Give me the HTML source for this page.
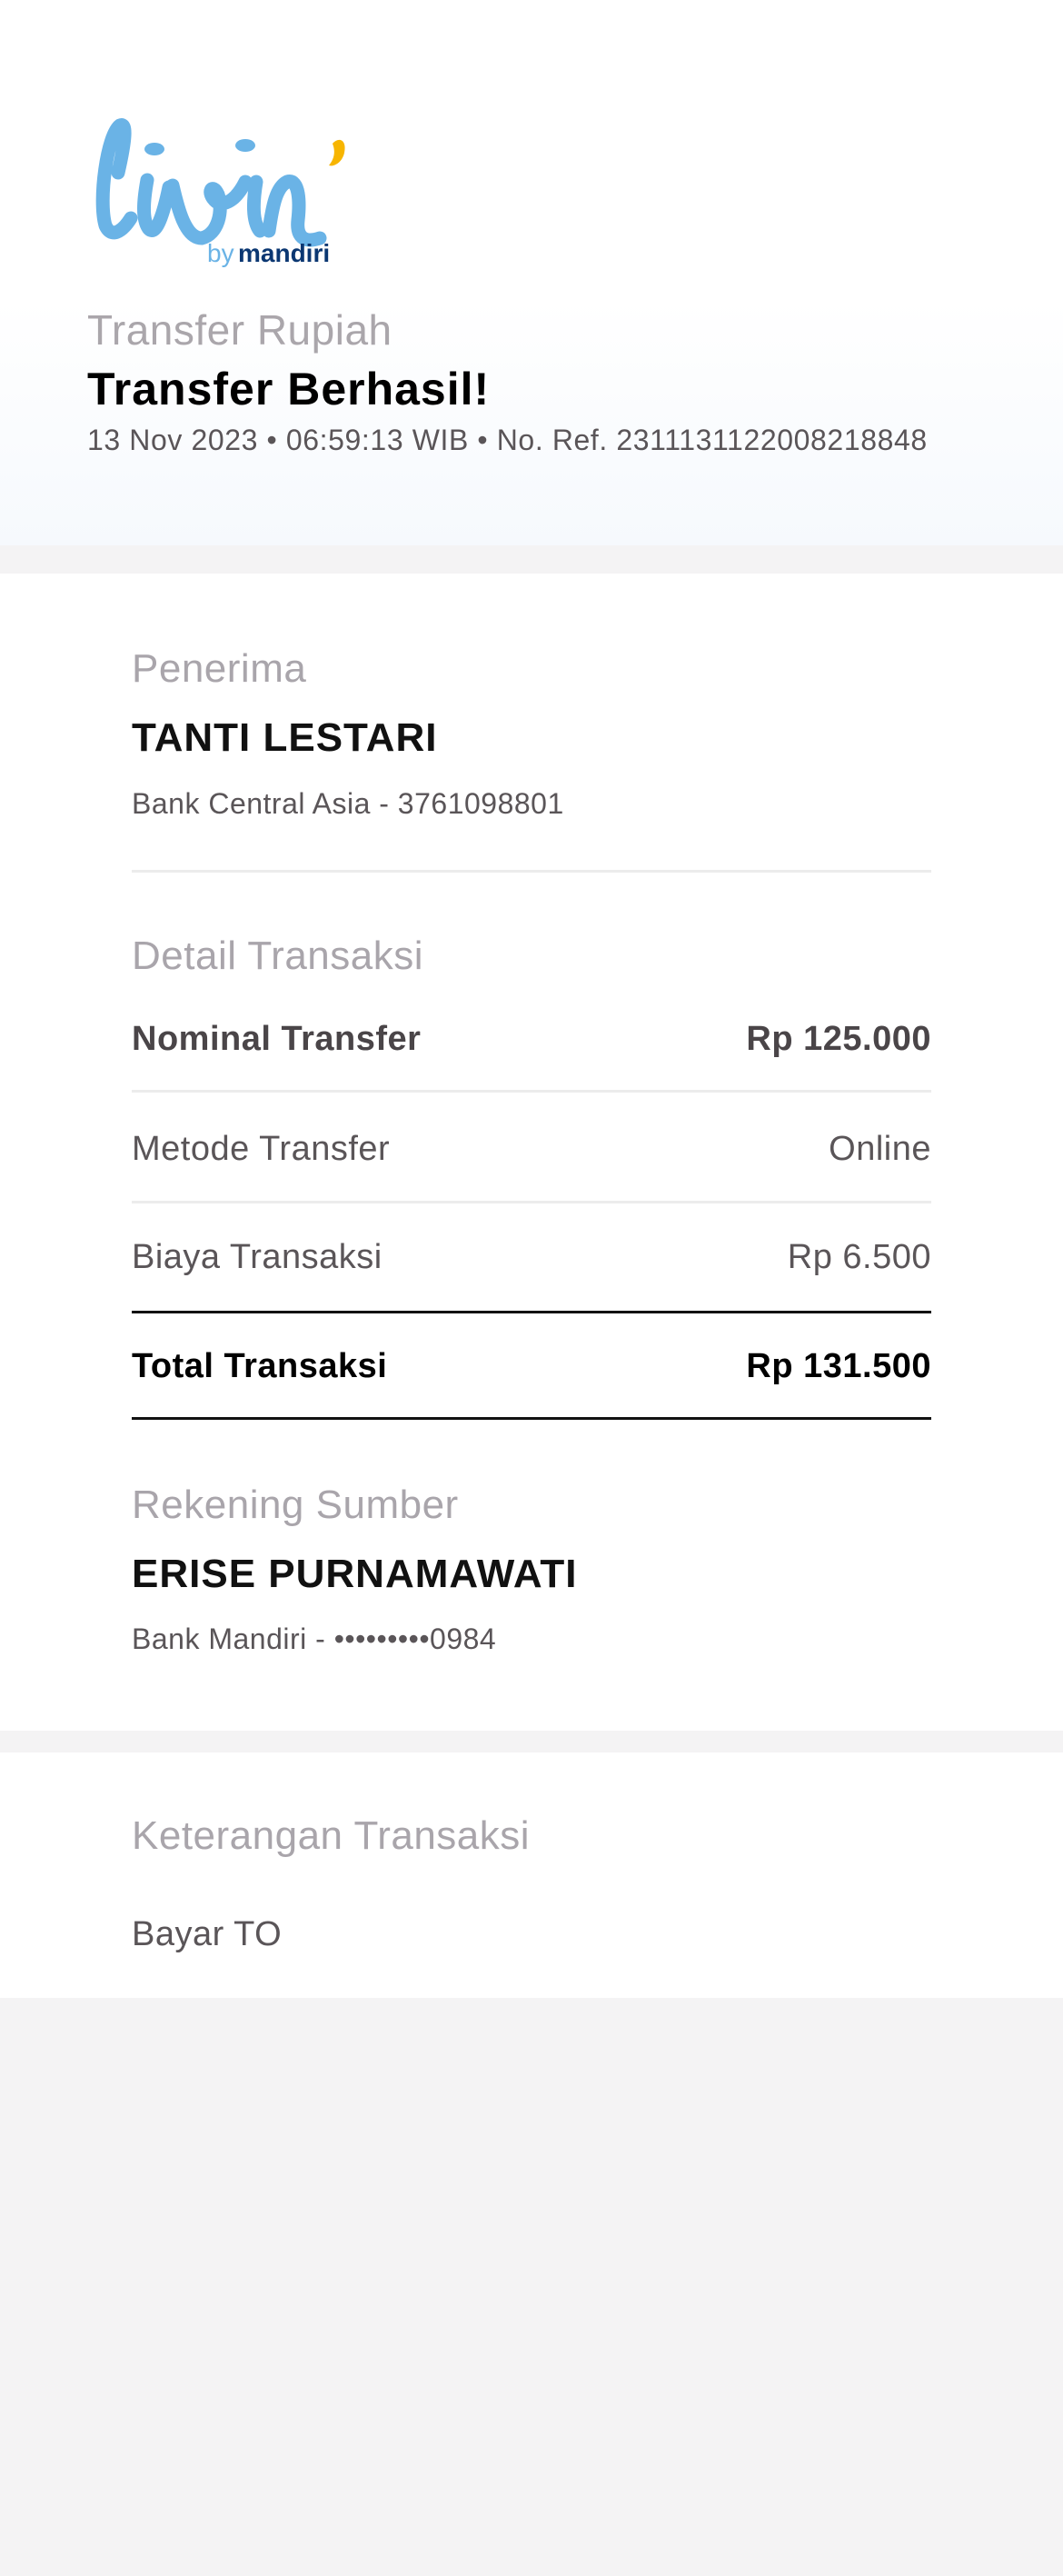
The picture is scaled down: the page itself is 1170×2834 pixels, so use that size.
<!DOCTYPE html>
<html><head><meta charset="utf-8">
<style>
*{margin:0;padding:0;box-sizing:border-box}
body{width:1170px;height:2834px;background:#f4f3f4;position:relative;font-family:"Liberation Sans",sans-serif;overflow:hidden}
.abs{position:absolute;white-space:nowrap}
.hdr{position:absolute;left:0;top:0;width:1170px;height:600px;background:linear-gradient(#fff 0,#fff 330px,#f6f9fd 600px)}
.card{position:absolute;left:0;width:1170px;background:#fff}
.lbl{color:#a9a5ab;font-size:44px;line-height:50px;letter-spacing:0.5px}
.name{color:#111;font-size:44px;font-weight:bold;line-height:50px;letter-spacing:1px}
.sub{color:#5a5558;font-size:32px;line-height:40px;letter-spacing:0.5px}
.row{position:absolute;left:145px;width:880px;font-size:38px;line-height:46px;color:#5a5558;display:flex;justify-content:space-between;letter-spacing:0.5px}
.line{position:absolute;left:145px;width:880px;height:3px;background:#ececec}
.bline{position:absolute;left:145px;width:880px;height:3px;background:#111}
</style></head><body>
<div class="hdr"></div>
<svg class="abs" style="left:100px;top:120px" width="300" height="190" viewBox="0 0 300 190">
<g fill="none" stroke="#6ab3e6" stroke-width="15" stroke-linecap="round" stroke-linejoin="round">
<path d="M30 70 C38 35 40 14 32 18 C18 28 8 100 16 128 C22 142 34 136 44 120"/>
<path d="M62 78 C58 100 56 122 64 132 C72 140 80 115 86 86"/>
<path d="M90 84 C96 110 104 142 122 142 C140 138 146 112 140 94 C134 80 126 92 138 102 C150 108 162 96 170 80"/>
<path d="M182 80 C178 104 178 124 186 134"/>
<path d="M196 134 C200 106 204 86 216 80 C230 76 230 104 228 122 C226 140 234 148 252 142"/>
</g>
<ellipse cx="70" cy="44" rx="11" ry="7" fill="#6ab3e6"/>
<ellipse cx="170" cy="40" rx="11" ry="7" fill="#6ab3e6"/>
<path d="M266 38 C273 30 282 34 279 48 C277 58 268 64 262 62 C267 56 270 48 266 38 Z" fill="#f7b500"/>
<text x="128" y="168" font-family="Liberation Sans" font-size="28" fill="#6ab3e6">by</text>
<text x="162" y="168" font-family="Liberation Sans" font-size="28" font-weight="bold" fill="#0b3772">mandiri</text>
</svg>
<div class="abs" style="left:96px;top:338px;font-size:46px;line-height:50px;color:#aaa6ab;letter-spacing:0.5px">Transfer Rupiah</div>
<div class="abs" style="left:96px;top:400px;font-size:50px;line-height:56px;font-weight:bold;color:#000;letter-spacing:1px">Transfer Berhasil!</div>
<div class="abs" style="left:96px;top:464px;font-size:32px;line-height:40px;color:#5a5558;letter-spacing:0.6px">13 Nov 2023 • 06:59:13 WIB • No. Ref. 2311131122008218848</div>

<div class="card" style="top:631px;height:1273px"></div>
<div class="abs lbl" style="left:145px;top:711px">Penerima</div>
<div class="abs name" style="left:145px;top:787px">TANTI LESTARI</div>
<div class="abs sub" style="left:145px;top:864px">Bank Central Asia - 3761098801</div>
<div class="line" style="top:957px"></div>
<div class="abs lbl" style="left:145px;top:1027px">Detail Transaksi</div>
<div class="row" style="top:1120px;font-weight:bold;color:#4a4548"><span>Nominal Transfer</span><span>Rp 125.000</span></div>
<div class="line" style="top:1199px"></div>
<div class="row" style="top:1241px"><span>Metode Transfer</span><span>Online</span></div>
<div class="line" style="top:1321px"></div>
<div class="row" style="top:1360px"><span>Biaya Transaksi</span><span>Rp 6.500</span></div>
<div class="bline" style="top:1442px"></div>
<div class="row" style="top:1480px;color:#000;font-weight:bold"><span>Total Transaksi</span><span>Rp 131.500</span></div>
<div class="bline" style="top:1559px"></div>
<div class="abs lbl" style="left:145px;top:1631px">Rekening Sumber</div>
<div class="abs name" style="left:145px;top:1707px">ERISE PURNAMAWATI</div>
<div class="abs sub" style="left:145px;top:1783px">Bank Mandiri - •••••••••0984</div>

<div class="card" style="top:1928px;height:270px"></div>
<div class="abs lbl" style="left:145px;top:1995px">Keterangan Transaksi</div>
<div class="abs" style="left:145px;top:2105px;font-size:38px;line-height:46px;color:#5a5558;letter-spacing:0.5px">Bayar TO</div>
</body></html>
